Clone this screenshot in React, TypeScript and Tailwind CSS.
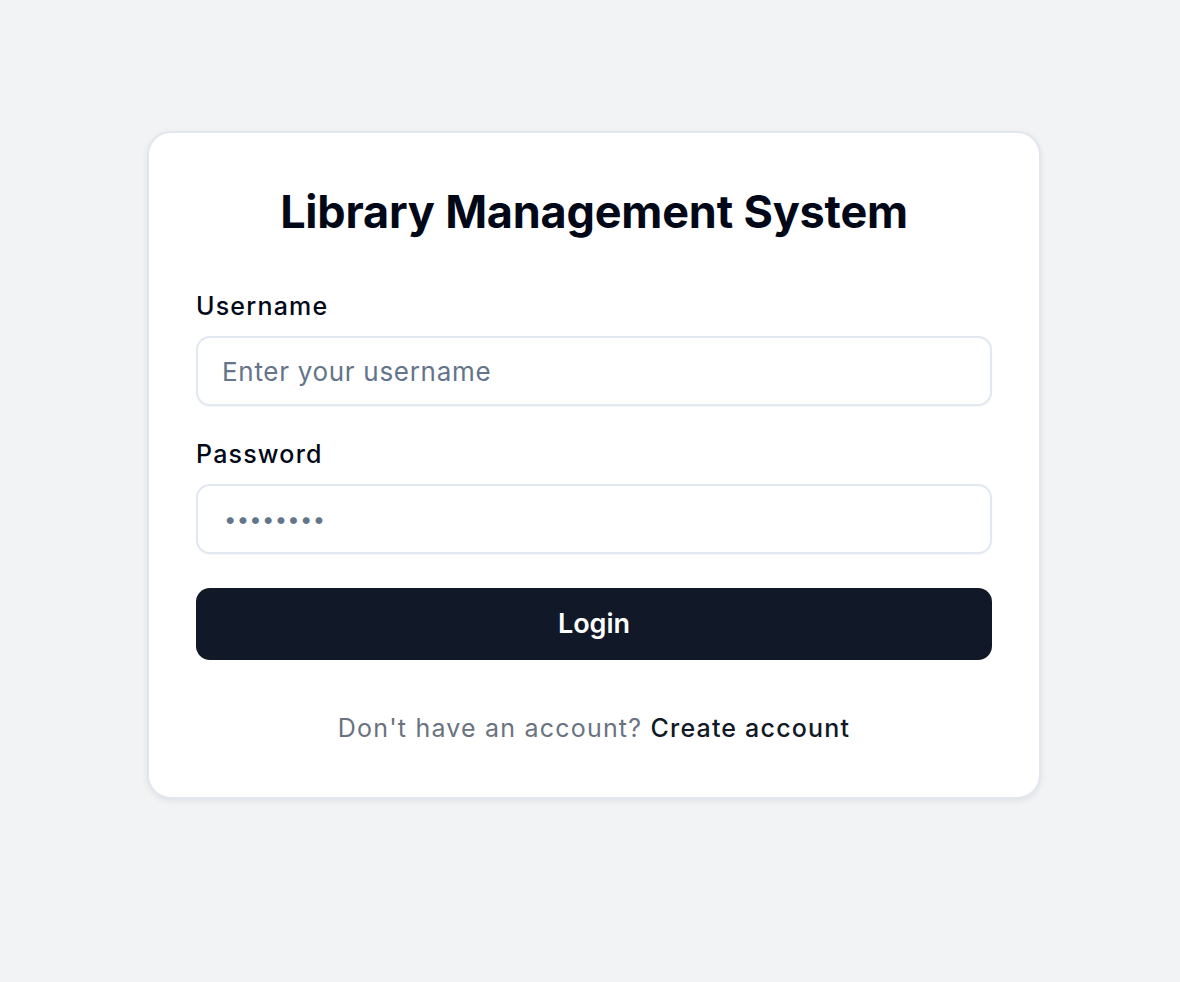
import { useState } from 'react';

export default function App() {
  const [username, setUsername] = useState('');
  const [password, setPassword] = useState('');

  return (
    <div
      className="min-h-screen w-full bg-[#f2f3f5] flex justify-center pl-2"
      style={{ fontFamily: 'Inter, "Noto Sans", sans-serif' }}
    >
      <div className="mt-[131px] self-start w-[894px] rounded-[24px] border-2 border-[#e2e6ee] bg-white px-[47px] pt-[47px] pb-[51px] shadow-[0_2px_6px_rgba(15,23,42,0.08)]">
        <h1 className="pt-[5px] text-center text-[45px] leading-[54px] font-bold tracking-[-0.2px] text-[#020817]">
          Library Management System
        </h1>

        <form className="mt-[49px]" onSubmit={(e) => e.preventDefault()}>
          <label className="block text-[25px] leading-[36px] font-medium tracking-[1.2px] text-[#020817]">
            Username
          </label>
          <input
            type="text"
            value={username}
            onChange={(e) => setUsername(e.target.value)}
            placeholder="Enter your username"
            className="mt-3 block w-full h-[70px] rounded-[14px] border-2 border-[#e2e8f0] bg-white px-6 text-[26px] tracking-[0.7px] text-[#020817] placeholder:text-[#64748b] outline-none shadow-[0_1px_2px_rgba(15,23,42,0.04)]"
          />

          <label className="mt-[30px] block text-[25px] leading-[36px] font-medium tracking-[1.2px] text-[#020817]">
            Password
          </label>
          <input
            type="password"
            value={password}
            onChange={(e) => setPassword(e.target.value)}
            placeholder="••••••••"
            className="mt-3 block w-full h-[70px] rounded-[14px] border-2 border-[#e2e8f0] bg-white pl-[26px] pr-6 text-[22px] tracking-[0.3px] text-[#020817] placeholder:text-[#64748b] outline-none shadow-[0_1px_2px_rgba(15,23,42,0.04)]"
          />

          <button
            type="submit"
            className="mt-[34px] block w-full h-[72px] rounded-[14px] bg-[#111827] text-[27px] font-semibold text-white"
          >
            Login
          </button>
        </form>

        <p className="mt-[50px] text-center text-[25px] leading-[36px] tracking-[1.2px] text-[#6b7280]">
          Don't have an account?{' '}
          <a href="#" className="font-medium text-[#111827]">
            Create account
          </a>
        </p>
      </div>
    </div>
  );
}
